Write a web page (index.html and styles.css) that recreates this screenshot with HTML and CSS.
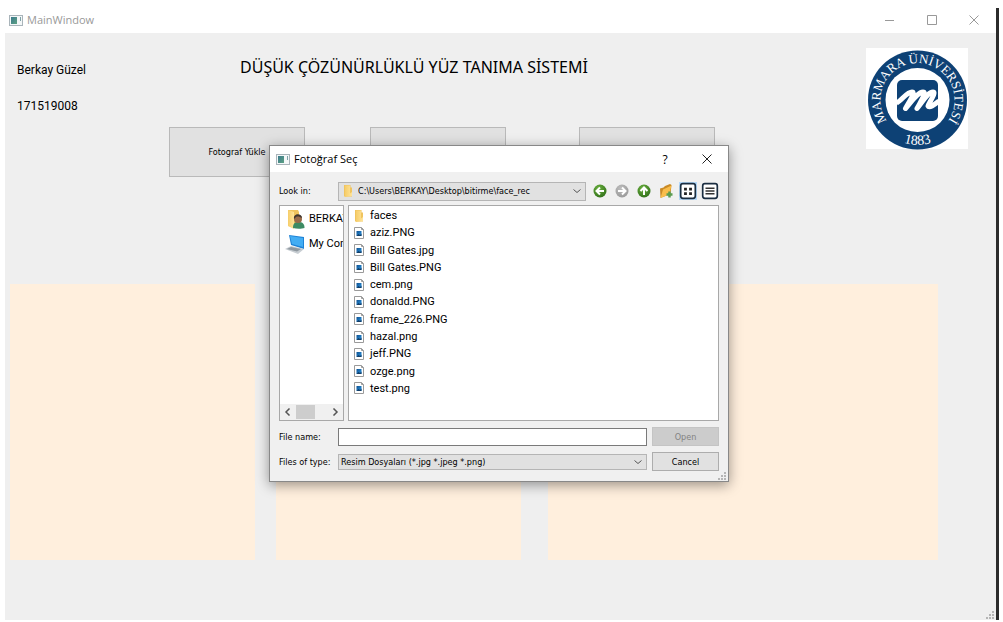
FILE: index.html
```html
<!DOCTYPE html>
<html lang="tr">
<head>
<meta charset="utf-8">
<meta name="viewport" content="width=device-width, initial-scale=1">
<title>MainWindow</title>
<link rel="stylesheet" href="styles.css">
</head>
<body>
<svg class="defs" aria-hidden="true">
  <defs>
    <linearGradient id="screen" x1="0" y1="0" x2="1" y2="1"><stop offset="0" stop-color="#0e4f8f"/><stop offset="1" stop-color="#2f9be6"/></linearGradient>
    <linearGradient id="fold" x1="0" y1="0" x2="1" y2="0"><stop offset="0" stop-color="#f6cd69"/><stop offset="1" stop-color="#ffe49a"/></linearGradient>
    <radialGradient id="green" cx=".4" cy=".3" r=".8"><stop offset="0" stop-color="#6bb13f"/><stop offset="1" stop-color="#2d6b17"/></radialGradient>
    <radialGradient id="gray" cx=".4" cy=".3" r=".8"><stop offset="0" stop-color="#bdbdbd"/><stop offset="1" stop-color="#969696"/></radialGradient>
    <linearGradient id="app" x1="0" y1="0" x2="1" y2="1"><stop offset="0" stop-color="#3b7a8c"/><stop offset="1" stop-color="#5da183"/></linearGradient>
  </defs>
  <symbol id="i-app" viewBox="0 0 14 12"><rect x=".5" y="1.5" width="13" height="10" fill="#f4f7f8" stroke="#a9b4ba"/><rect x="2" y="3" width="6" height="7" fill="url(#app)"/><path d="M11.500 3v4" stroke="#7fa3a8"/></symbol>
  <symbol id="i-folder" viewBox="0 0 12 14"><path d="M2 1h6.500v2.500H10v9H2z" fill="#f0c45e"/><path d="M3 1.500h5v8l2-1.500V12L3 13z" fill="url(#fold)"/></symbol>
  <symbol id="i-image" viewBox="0 0 12 14"><path d="M1.500 1.500h7l2 2v9h-9z" fill="#fff" stroke="#9a9a9a"/><path d="M8.500 1.500v2h2" fill="none" stroke="#9a9a9a"/><rect x="3.500" y="5" width="5" height="5" fill="url(#screen)"/><path d="M3.500 10l2-2 1.500 1 1.500-1.500V10z" fill="#123c66"/></symbol>
  <symbol id="i-chev" viewBox="0 0 8 6"><path d="M.5 1.500l3.500 3 3.500-3" fill="none" stroke="#555"/></symbol>
</svg>

<div class="window">
  <header class="titlebar">
    <svg class="app-icon"><use href="#i-app"/></svg>
    <h1 class="window-name">MainWindow</h1>
    <button class="caption" aria-label="Minimize"><svg viewBox="0 0 10 10"><path d="M0 5.500h9"/></svg></button>
    <button class="caption" aria-label="Maximize"><svg viewBox="0 0 10 10"><path d="M.5.5h9v9h-9z"/></svg></button>
    <button class="caption" aria-label="Close"><svg viewBox="0 0 10 10"><path d="M.5.5l9 9m0-9l-9 9"/></svg></button>
  </header>

  <main class="client">
    <section class="top">
      <div class="student"><p>Berkay Güzel</p><p>171519008</p></div>
      <div class="middle">
        <h2 class="heading">DÜŞÜK ÇÖZÜNÜRLÜKLÜ YÜZ TANIMA SİSTEMİ</h2>
        <div class="actions">
          <button class="action">Fotograf Yükle</button>
          <button class="action second" aria-label="İkinci işlem"></button>
          <button class="action" aria-label="Üçüncü işlem"></button>
        </div>
      </div>
      <svg class="logo" viewBox="0 0 102 102" role="img" aria-label="Marmara Üniversitesi 1883">
        <rect width="102" height="101" fill="#fff"/>
        <circle cx="51.500" cy="52" r="49.500" fill="#0d4175"/>
        <circle cx="51.500" cy="52" r="32" fill="#fff"/>
        <rect x="31" y="32" width="41" height="41" rx="5" fill="#0d4175"/>
        <path d="M30.500 55C36 52 41 44 46 44C50 44 43 54 39.500 60.500C46 53 52 44 57 44C61 44 55 53 51 60.500C57 53 62 44 67 44C71 44 62 56 62 58C63 60.500 68 57 73 53" fill="none" stroke="#fff" stroke-width="5" stroke-linejoin="round"/>
        <path id="arc-top" d="M21 73A37 37 0 1 1 82 73" fill="none"/>
        <path id="arc-bottom" d="M20 84A45 45 0 0 0 83 84" fill="none"/>
        <text class="logo-name"><textPath href="#arc-top" startOffset="50%">MARMARA ÜNİVERSİTESİ</textPath></text>
        <text class="logo-year"><textPath href="#arc-bottom" startOffset="50%">1883</textPath></text>
      </svg>
    </section>

    <section class="panels">
      <div class="panel"></div>
      <div class="panel"></div>
      <div class="panel wide"></div>
    </section>
    <svg class="grip" viewBox="0 0 9 9"><path d="M6 0h2v2H6zM3 3h2v2H3zM6 3h2v2H6zM0 6h2v2H0zM3 6h2v2H3zM6 6h2v2H6z"/></svg>
  </main>
</div>

<div class="dialog" role="dialog" aria-labelledby="dialog-name">
  <header class="dialog-bar">
    <svg class="app-icon"><use href="#i-app"/></svg>
    <h2 class="dialog-name" id="dialog-name">Fotoğraf Seç</h2>
    <button class="caption dark help" aria-label="Help">?</button>
    <button class="caption dark" aria-label="Close"><svg viewBox="0 0 10 10"><path d="M.5.5l9 9m0-9l-9 9"/></svg></button>
  </header>
  <div class="dialog-body">
    <div class="lookin">
      <label class="label" for="path">Look in:</label>
      <div class="combo path">
        <svg class="file-icon"><use href="#i-folder"/></svg>
        <select id="path"><option>C:\Users\BERKAY\Desktop\bitirme\face_rec</option></select>
        <svg class="chev"><use href="#i-chev"/></svg>
      </div>
      <div class="tools">
        <button class="tool" aria-label="Back"><svg viewBox="0 0 16 16"><circle cx="8" cy="8" r="6.500" fill="url(#green)"/><path d="M12 8H5m3-3.500L4.500 8 8 11.500" fill="none" stroke="#fff" stroke-width="2"/></svg></button>
        <button class="tool" aria-label="Forward"><svg viewBox="0 0 16 16"><circle cx="8" cy="8" r="6.500" fill="url(#gray)"/><path d="M4 8h7M8 4.500L11.500 8 8 11.500" fill="none" stroke="#fff" stroke-width="2"/></svg></button>
        <button class="tool" aria-label="Parent directory"><svg viewBox="0 0 16 16"><circle cx="8" cy="8" r="6.500" fill="url(#green)"/><path d="M8 12V5M4.500 8L8 4.500 11.500 8" fill="none" stroke="#fff" stroke-width="2"/></svg></button>
        <button class="tool" aria-label="New folder"><svg viewBox="0 0 16 16"><path d="M2 5.500l3.500-1L7 3l5-2 1.500 1-1 9L2.500 15z" fill="#c98a26"/><path d="M5 6.500l8.500-4L11 11.500 2.500 15z" fill="#f9bd4b"/><path d="M11.500 8.500v6m-3-3h6" stroke="#5a9c50" stroke-width="2.500"/></svg></button>
        <button class="tool view checked" aria-label="List view" aria-pressed="true"><svg viewBox="0 0 16 16"><rect x="1.500" y="1.500" width="13" height="13" rx="2" fill="#fff" stroke="#1a2d40" stroke-width="1.500"/><path d="M4.500 5h2.500v2.500H4.500zM9 5h2.500v2.500H9zM4.500 9h2.500v2.500H4.500zM9 9h2.500v2.500H9z" fill="#222"/></svg></button>
        <button class="tool view" aria-label="Detail view"><svg viewBox="0 0 16 16"><rect x="1.500" y="1.500" width="13" height="13" rx="2" fill="#fff" stroke="#1a2d40" stroke-width="1.500"/><path d="M4 5.500h8M4 8h8M4 10.500h8" stroke="#333" stroke-width="1.300"/></svg></button>
      </div>
    </div>

    <div class="browser">
      <nav class="side">
        <ul class="places">
          <li><svg viewBox="0 0 20 22"><path d="M3 2h10l1 2v16l-11-2z" fill="#efc35d"/><path d="M3 2l6 2v17l-6-3z" fill="url(#fold)"/><path d="M8 20c0-5 2-6 5.500-6s6 1 6 6c-3 1-8 1-11.500 0z" fill="#3d8b63"/><circle cx="13" cy="11" r="4" fill="#9a6b49"/><path d="M9 11c-1-6 8-6 8-1-2-1-4-2-6-1z" fill="#40362f"/></svg>BERKAY</li>
          <li><svg viewBox="0 0 20 22"><path d="M4 2l15 2v12L6 12z" fill="#1f83d6"/><path d="M5 3l13 2v9L7 11z" fill="#43adf3"/><path d="M0 16l6-3 13 3-6 5z" fill="#c7cdd2"/><path d="M2 16l4-2 10 2-4 2.500z" fill="#8f989f"/></svg>My Computer</li>
        </ul>
        <div class="scrollbar"><svg viewBox="0 0 8 8"><path d="M5.500.5L2 4l3.500 3.500"/></svg><span class="thumb"></span><svg viewBox="0 0 8 8"><path d="M2.500.5L6 4 2.500 7.500"/></svg></div>
      </nav>
      <ul class="files">
        <li><svg class="file-icon"><use href="#i-folder"/></svg>faces</li>
        <li><svg class="file-icon"><use href="#i-image"/></svg>aziz.PNG</li>
        <li><svg class="file-icon"><use href="#i-image"/></svg>Bill Gates.jpg</li>
        <li><svg class="file-icon"><use href="#i-image"/></svg>Bill Gates.PNG</li>
        <li><svg class="file-icon"><use href="#i-image"/></svg>cem.png</li>
        <li><svg class="file-icon"><use href="#i-image"/></svg>donaldd.PNG</li>
        <li><svg class="file-icon"><use href="#i-image"/></svg>frame_226.PNG</li>
        <li><svg class="file-icon"><use href="#i-image"/></svg>hazal.png</li>
        <li><svg class="file-icon"><use href="#i-image"/></svg>jeff.PNG</li>
        <li><svg class="file-icon"><use href="#i-image"/></svg>ozge.png</li>
        <li><svg class="file-icon"><use href="#i-image"/></svg>test.png</li>
      </ul>
    </div>

    <form class="form">
      <label class="label" for="file">File name:</label>
      <input class="field" id="file" type="text">
      <button class="push" type="button" disabled>Open</button>
      <label class="label" for="type">Files of type:</label>
      <div class="combo type">
        <select id="type"><option>Resim Dosyaları (*.jpg *.jpeg *.png)</option></select>
        <svg class="chev"><use href="#i-chev"/></svg>
      </div>
      <button class="push" type="button">Cancel</button>
    </form>
  </div>
  <svg class="grip" viewBox="0 0 9 9"><path d="M6 0h2v2H6zM3 3h2v2H3zM6 3h2v2H6zM0 6h2v2H0zM3 6h2v2H3zM6 6h2v2H6z"/></svg>
</div>
</body>
</html>
```
FILE: styles.css
```css
* { box-sizing: border-box; }
body {
  margin: 0;
  background: #fff;
  color: #000;
  font-family: "DejaVu Sans Condensed", "DejaVu Sans", sans-serif;
  font-size: 9px;
}
h1, h2, p, ul { margin: 0; padding: 0; font-weight: 400; }
ul { list-style: none; }
button, input, select { font: inherit; color: inherit; margin: 0; padding: 0; }
.defs { position: absolute; width: 0; height: 0; }

.window {
  min-height: calc(100vh - 10px);
  display: flex;
  flex-direction: column;
  margin: 8px 4px 2px 5px;
  border-right: 3px solid #2b2b2b;
}
.titlebar {
  height: 25px;
  display: flex;
  align-items: center;
  padding: 0 1px 2px 4px;
}
.app-icon { width: 14px; height: 12px; flex: none; }
.window-name {
  flex: 1;
  margin-left: 4px;
  font: 11px/16px "Open Sans", "Noto Sans", sans-serif;
  color: #999;
}
.caption {
  width: 42px;
  height: 24px;
  display: grid;
  place-items: center;
  border: 0;
  background: none;
}
.caption svg { width: 10px; height: 10px; fill: none; stroke: #999; }
.caption.dark svg { stroke: #222; }
.help { font: 12px "Open Sans", sans-serif; }

.client {
  position: relative;
  flex: 1;
  background: #efefef;
  padding: 15px 58px 24px 5px;
}
.top { display: flex; min-height: 236px; padding: 0 0 0 7px; }
.student { width: 152px; padding-top: 12px; font: 12px/20px Roboto, sans-serif; }
.student p + p { margin-top: 16px; }
.middle { flex: 1; }
.heading {
  margin-left: 71px;
  padding-top: 7px;
  font: 16px/24px "Noto Sans", sans-serif;
}
.actions { display: flex; gap: 65px; margin-top: 48px; }
.action {
  width: 136px;
  height: 50px;
  background: #e1e1e1;
  border: 1px solid #b9b9b9;
}
.action.second { margin-right: 8px; }
.logo { width: 102px; height: 102px; margin-right: -30px; flex: none; }
.logo text { fill: #fff; font-family: "Liberation Serif", serif; text-anchor: middle; }
.logo-name { font-size: 13px; }
.logo-year { font-size: 14px; }

.panels { display: flex; height: 276px; gap: 21px; }
.panel { flex: 245; background: #ffefdd; }
.panel.wide { flex: 390; margin-left: 6px; }
.grip { position: absolute; right: 1px; bottom: 0; width: 9px; height: 9px; fill: #b5b5b5; }

.dialog {
  position: absolute;
  left: 269px;
  top: 145px;
  width: 460px;
  background: #f0f0f0;
  border: 1px solid #888;
  box-shadow: 0 3px 12px rgba(0, 0, 0, .4);
}
.dialog-bar {
  height: 26px;
  display: flex;
  align-items: center;
  padding-left: 6px;
  background: #fff;
}
.dialog-name {
  flex: 1;
  margin-left: 4px;
  font: 11px/16px "Open Sans", "Noto Sans", sans-serif;
}
.dialog-body { padding: 9px 9px 10px 9px; }
.lookin { display: flex; align-items: center; height: 20px; }
.label { width: 59px; flex: none; white-space: nowrap; }
.combo {
  display: flex;
  align-items: center;
  background: #e1e1e1;
  border: 1px solid #b5b5b5;
}
.combo select {
  flex: 1;
  min-width: 0;
  appearance: none;
  border: 0;
  background: none;
}
.path { flex: 1; height: 19px; padding: 0 4px 0 3px; }
.path select { margin-left: 4px; }
.type { height: 16px; padding: 0 4px 0 2px; }
.chev { width: 8px; height: 6px; flex: none; }
.file-icon { width: 12px; height: 14px; flex: none; }
.tools { display: flex; gap: 4px; margin-left: 5px; }
.tool {
  width: 18px;
  height: 18px;
  display: grid;
  place-items: center;
  border: 0;
  background: none;
}
.tool svg { width: 16px; height: 16px; }
.tool.view svg { width: 18px; height: 18px; }
.tool.checked { background: #b4d8f8; }

.browser {
  display: flex;
  gap: 4px;
  height: 216px;
  margin-top: 4px;
  font: 11px/17px Roboto, sans-serif;
}
.side, .files { background: #fff; border: 1px solid #a8a8a8; }
.side {
  width: 65px;
  display: flex;
  flex-direction: column;
  justify-content: space-between;
  overflow: hidden;
}
.places li { display: flex; align-items: center; gap: 4px; height: 25px; padding-left: 5px; white-space: nowrap; }
.places svg { width: 20px; height: 22px; flex: none; }
.scrollbar { display: flex; align-items: center; height: 16px; padding: 0 4px; background: #f0f0f0; }
.scrollbar svg { width: 8px; height: 8px; fill: none; stroke: #555; stroke-width: 1.5; }
.scrollbar .thumb { width: 19px; height: 14px; margin: 0 auto 0 4px; background: #cdcdcd; }
.files {
  flex: 1;
  display: flex;
  flex-direction: column;
  justify-content: space-between;
  padding: 1px 4px 23px;
}
.files li { display: flex; align-items: center; gap: 5px; }

.form {
  display: grid;
  grid-template-columns: 59px 1fr 72px;
  row-gap: 6px;
  align-items: center;
  margin-top: 6px;
}
.field { height: 18px; background: #fff; border: 1px solid #7a7a7a; padding: 0 3px; }
.push { height: 19px; margin-left: 5px; background: #e1e1e1; border: 1px solid #adadad; }
.push:disabled { background: #ccc; border-color: #c4c4c4; color: #838383; }
```
